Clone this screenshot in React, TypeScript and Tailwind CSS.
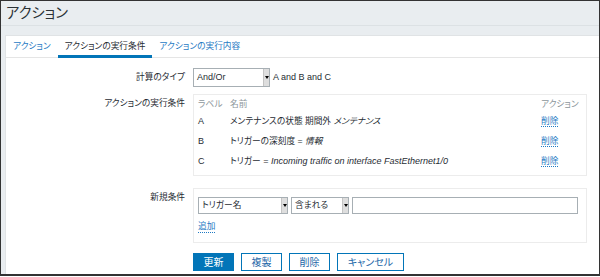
const font =
  "font-['Liberation_Sans','Noto_Sans_CJK_JP',sans-serif] [font-feature-settings:'palt']";

function Select({ text, className }: { text: string; className: string }) {
  return (
    <div
      className={`flex items-center justify-between border border-[#a7afb4] bg-white ${className}`}
    >
      <span className="pl-[3px] leading-none text-[#1f2c33]">{text}</span>
      <span className="flex w-[6px] items-center justify-center self-stretch border-l border-[#c4c4c4] bg-[#dedede]">
        <span className="h-0 w-0 border-x-[2px] border-t-[3px] border-x-transparent border-t-black" />
      </span>
    </div>
  );
}

function Del() {
  return (
    <span className="border-b border-dotted border-[#1f7ac4] text-[8.7px] leading-[11px] text-[#1f7ac4]">
      削除
    </span>
  );
}

const conditions = [
  {
    label: "A",
    name: (
      <span className="text-[8.7px]">
        メンテナンスの状態 期間外 <i>メンテナンス</i>
      </span>
    ),
  },
  {
    label: "B",
    name: (
      <span className="text-[8.7px]">
        トリガーの深刻度 = <i>情報</i>
      </span>
    ),
  },
  {
    label: "C",
    name: (
      <>
        <span className="text-[8.7px]">トリガー</span> ={" "}
        <i>Incoming traffic on interface FastEthernet1/0</i>
      </>
    ),
  },
];

export default function App() {
  return (
    <div className={`h-[277px] w-[600px] bg-white text-[9px] text-[#1f2c33] ${font}`}>
      <div className="flex h-[276px] w-[600px] flex-col border-x border-t border-b-2 border-[#333] bg-[#e9edf0]">
        <div className="h-[25px] border-b border-[#dce1e4] pl-[5px] text-[14.3px] leading-[24px] text-[#2b3236]">
          アクション
        </div>
        <div className="h-[9px]" />
        <div className="ml-[4px] flex-1 border-l border-t border-[#e0e3e5] bg-white">
          {/* tabs */}
          <div className="flex h-[22px] border-b border-[#e5e5e5] text-[8.7px]">
            <div className="flex items-center px-[7px] text-[#1f7ac4]">アクション</div>
            <div className="-mb-px flex items-center border-b-[3px] border-[#0275b8] px-[7px] pt-[3px]">
              アクションの実行条件
            </div>
            <div className="flex items-center px-[7px] text-[#1f7ac4]">アクションの実行内容</div>
          </div>

          {/* calc type */}
          <div className="mt-[10px] flex items-center gap-[8px]">
            <div className="w-[179px] text-right text-[8.7px]">計算のタイプ</div>
            <Select text="And/Or" className="h-[19px] w-[77px]" />
            <span className="-ml-[5px]">A and B and C</span>
          </div>

          {/* conditions */}
          <div className="mt-[7px] flex items-start gap-[8px]">
            <div className="w-[179px] pt-[3px] text-right text-[8.7px] leading-[12px]">
              アクションの実行条件
            </div>
            <div className="w-[394px] border border-[#ececec] pt-[3px] pb-[3px] pl-[4px]">
              <div className="grid h-[14px] grid-cols-[32px_311px_1fr] items-center text-[8.7px] text-[#8c969b]">
                <span>ラベル</span>
                <span>名前</span>
                <span>アクション</span>
              </div>
              {conditions.map((c) => (
                <div
                  key={c.label}
                  className="grid h-[20px] grid-cols-[32px_311px_1fr] items-center"
                >
                  <span>{c.label}</span>
                  <span className="whitespace-nowrap">{c.name}</span>
                  <span>
                    <Del />
                  </span>
                </div>
              ))}
            </div>
          </div>

          {/* new condition */}
          <div className="mt-[12px] flex items-start gap-[8px]">
            <div className="w-[179px] pt-[3px] text-right text-[8.7px] leading-[12px]">
              新規条件
            </div>
            <div className="w-[394px] border border-[#ececec] pt-[8px] pb-[9px] pl-[4px] text-[8.7px]">
              <div className="flex gap-[3px]">
                <Select text="トリガー名" className="h-[17px] w-[90px]" />
                <Select text="含まれる" className="h-[17px] w-[58px]" />
                <div className="h-[17px] w-[226px] border border-[#a7afb4] bg-white" />
              </div>
              <div className="mt-[7px] flex h-[12px] items-center">
                <span className="border-b border-dotted border-[#1f7ac4] leading-[11px] text-[#1f7ac4]">
                  追加
                </span>
              </div>
            </div>
          </div>

          {/* buttons */}
          <div className="mt-[10px] ml-[187px] flex gap-[7px] text-[10px]">
            <button className="h-[18px] w-[41px] border border-[#0275b8] bg-[#0275b8] text-white">
              更新
            </button>
            <button className="h-[18px] w-[41px] border border-[#0275b8] bg-white text-[#1d67a8]">
              複製
            </button>
            <button className="h-[18px] w-[41px] border border-[#0275b8] bg-white text-[#1d67a8]">
              削除
            </button>
            <button className="h-[18px] w-[67px] border border-[#0275b8] bg-white text-[#1d67a8]">
              キャンセル
            </button>
          </div>
        </div>
      </div>
    </div>
  );
}
